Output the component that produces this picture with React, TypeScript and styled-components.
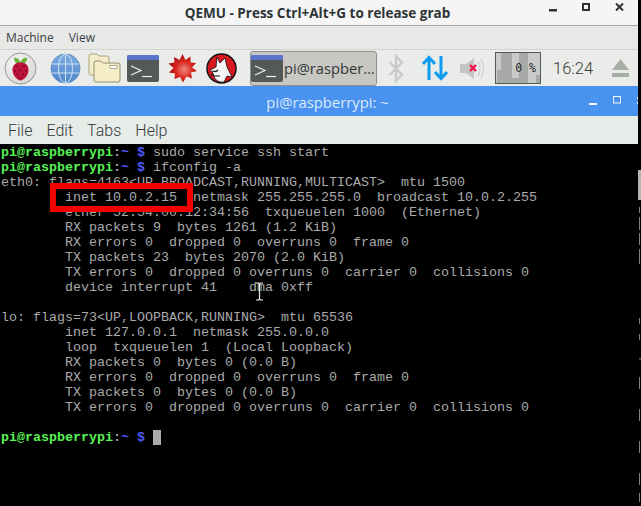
import React from "react";
import styled, { createGlobalStyle } from "styled-components";

const Global = createGlobalStyle`
  html, body { margin: 0; padding: 0; background: #000; overflow: hidden; }
  #root { width: 641px; height: 506px; }
`;

const Screen = styled.div`
  width: 641px;
  height: 506px;
  box-sizing: border-box;
  padding-right: 3px;
  position: relative;
  display: flex;
  flex-direction: column;
  overflow: hidden;
  background: #000;
`;
const TitleBar = styled.div`
  height: 25px;
  flex: none;
  background: #f5f5f5;
  border-bottom: 1px solid #a9a9a7;
  display: flex;
  align-items: center;
  justify-content: center;
  position: relative;
  font: bold 13.5px "Open Sans", sans-serif;
  color: #2e3436;
`;
const TitleText = styled.span`
  display: block;
  transform: translateX(-1.5px);
`;
const WinButtons = styled.div`
  position: absolute;
  right: 14px;
  top: 3px;
  display: flex;
  gap: 25px;
  align-items: flex-start;
`;
const MinGlyph = styled.svg`
  margin-top: 6px;
`;
const MenuBar = styled.div`
  height: 23px;
  flex: none;
  background: #e8e8e6;
  border-bottom: 1px solid #d2d4d0;
  display: flex;
  align-items: center;
  gap: 15px;
  padding-left: 6px;
  font: 12px "Open Sans", sans-serif;
  color: #3a4246;
`;
const Panel = styled.div`
  height: 36px;
  flex: none;
  background: #e9ece8;
  display: flex;
  align-items: center;
`;
const Slot = styled.div<{ $w: number; $gap?: number }>`
  width: ${(p) => p.$w}px;
  margin-left: ${(p) => p.$gap ?? 0}px;
  flex: none;
  display: flex;
  align-items: center;
  justify-content: center;
`;
const TaskButton = styled.div`
  width: 127px;
  height: 35px;
  box-sizing: border-box;
  margin-left: 13px;
  flex: none;
  background: #c8c7c1;
  border: 1px solid #918f8a;
  border-radius: 3px;
  display: flex;
  align-items: center;
  gap: 1px;
  font: 14.7px "Open Sans", sans-serif;
  color: #33383a;
  white-space: nowrap;
  svg { flex: none; }
`;
const Cpu = styled.div`
  width: 46px;
  height: 32px;
  box-sizing: border-box;
  margin-left: 8px;
  flex: none;
  border: 1px solid #55585a;
  background: #c9cbc8;
  position: relative;
  overflow: hidden;
`;
const CpuBar = styled.div<{ $l: number; $w: number; $t: number }>`
  position: absolute;
  left: ${(p) => p.$l}px;
  width: ${(p) => p.$w}px;
  top: ${(p) => p.$t}px;
  bottom: 0;
  background: #a8aaa7;
`;
const CpuText = styled.span`
  position: absolute;
  right: 4px;
  top: 7px;
  font: 11.5px "DejaVu Sans Mono", monospace;
  color: #23282a;
  white-space: pre;
  line-height: 16px;
`;
const Clock = styled.div`
  width: 39px;
  margin-left: 12px;
  flex: none;
  font: 300 16.5px Roboto, sans-serif;
  color: #3b3a36;
  white-space: nowrap;
`;
const TermTitle = styled.div`
  height: 30px;
  box-sizing: border-box;
  padding: 2px 0 0 17px;
  flex: none;
  background: #4a92f0;
  color: #dcebfb;
  font: 14.8px "Open Sans", sans-serif;
  display: flex;
  align-items: center;
  justify-content: center;
  position: relative;
`;
const TermWinButtons = styled.div`
  position: absolute;
  right: 0;
  top: 10px;
  display: flex;
  gap: 15px;
  align-items: flex-start;
`;
const TermMenu = styled.div`
  height: 28px;
  flex: none;
  background: #e8ece8;
  display: flex;
  align-items: center;
  gap: 14px;
  padding-left: 8px;
  font: 300 16px Roboto, sans-serif;
  color: #33393c;
`;
const Terminal = styled.div`
  flex: 1;
  background: #000;
  padding: 1px 0 0 1px;
  font: 13.33px/15px "Liberation Mono", monospace;
  color: #aaa;
`;
const Line = styled.div`
  height: 15px;
  white-space: pre;
`;
const Prompt = styled.span`
  color: #55f255;
  font-weight: bold;
`;
const Path = styled.span`
  color: #5058f8;
  font-weight: bold;
`;
const Colon = styled.span`
  font-weight: bold;
  color: #aaa;
`;
const Block = styled.span`
  display: inline-block;
  width: 8px;
  height: 15px;
  background: #aaa;
  vertical-align: top;
`;
const RedBox = styled.div`
  position: absolute;
  left: 50px;
  top: 183px;
  width: 143px;
  height: 29px;
  box-sizing: border-box;
  border: 6px solid #f00000;
`;
const Cursor = styled.svg`
  position: absolute;
  left: 255px;
  top: 282px;
`;
const ScrollThumb = styled.div`
  position: absolute;
  right: 0;
  top: 170px;
  width: 3px;
  height: 30px;
  background: #b4b4b4;
`;
const Slivers = styled.svg`
  position: absolute;
  right: 0;
  top: 200px;
`;

const Raspberry = () => (
  <svg width="33" height="33" viewBox="0 0 33 33">
    <defs>
      <radialGradient id="ball" cx="0.4" cy="0.35" r="0.8">
        <stop offset="0" stopColor="#fafafa" />
        <stop offset="1" stopColor="#cfcfcd" />
      </radialGradient>
    </defs>
    <circle cx="16.5" cy="16.5" r="15.5" fill="url(#ball)" stroke="#9a9a98" />
    <path d="M10 6 Q14 5 16.5 10 Q19 5 23 6 Q23 11 19 12 L14 12 Q10 11 10 6Z" fill="#6cb33f" />
    <path d="M16.5 10.5 C22 10 25 14 24.5 19 C24 24 20 28 16.5 28.5 C13 28 9 24 8.5 19 C8 14 11 10 16.5 10.5Z" fill="#c0143c" />
    {[
      [13, 14.500], [20, 14.500], [16.5, 18], [11, 19], [22, 19], [13.5, 22.500], [19.5, 22.500], [16.5, 26],
    ].map(([x, y]) => (
      <circle key={`${x}-${y}`} cx={x} cy={y} r="1.300" fill="#8f0d2c" />
    ))}
  </svg>
);
const Globe = () => (
  <svg width="31" height="31" viewBox="0 0 31 31">
    <defs>
      <linearGradient id="gl" x1="0" y1="0" x2="0" y2="1">
        <stop offset="0" stopColor="#7faee3" />
        <stop offset="1" stopColor="#4e86c8" />
      </linearGradient>
    </defs>
    <circle cx="15.5" cy="15.5" r="14.5" fill="url(#gl)" stroke="#5c8cc2" />
    <g fill="none" stroke="#cfe0f4" strokeWidth="1">
      <ellipse cx="15.5" cy="15.5" rx="7" ry="14.5" />
      <path d="M15.5 1V30M1.5 11H29.5M1.5 20H29.5" />
    </g>
  </svg>
);
const Folder = () => (
  <svg width="33" height="30" viewBox="0 0 33 30">
    <path d="M1 3.5Q1 1 3 1H9L11 3H19Q21 3 21 5V22H3Q1 22 1 20Z" fill="#f4eccb" stroke="#a9a17f" />
    <path d="M6 10Q6 8 8 8H13L15 10H30Q32 10 32 12V27Q32 29 30 29H8Q6 29 6 27Z" fill="#f5edc8" stroke="#968e6e" />
    <rect x="22" y="12.5" width="7" height="3" fill="#fff" stroke="#938c70" strokeWidth="0.7" />
  </svg>
);
const TermIcon = () => (
  <svg width="32" height="27" viewBox="0 0 32 27">
    <rect x="0" y="0" width="32" height="27" rx="2" fill="#555955" />
    <path d="M0 2Q0 0 2 0H30Q32 0 32 2V5H0Z" fill="#5a74d0" />
    <path d="M4 11L14 15.5L4 20" fill="none" stroke="#f0f0ee" strokeWidth="1.200" />
    <path d="M15 21.5H25" stroke="#f0f0ee" strokeWidth="1.200" />
  </svg>
);
const Burst = () => (
  <svg width="29" height="29" viewBox="0 0 29 29">
    <defs>
      <radialGradient id="bu" cx="0.55" cy="0.55" r="0.5">
        <stop offset="0" stopColor="#f08a80" />
        <stop offset="0.6" stopColor="#d9261f" />
        <stop offset="1" stopColor="#b01010" />
      </radialGradient>
    </defs>
    <path
      d="M14.5 0L17.5 6L22.5 2.5L22.5 8.5L28 9L24 13.5L29 17L23 18.5L24 24.5L18.5 22.5L15 28.5L12 23L6.5 25L7 19.5L1 18.5L5.5 14L0.5 9.5L6.5 8.5L6 3L11.5 6Z"
      fill="url(#bu)"
    />
  </svg>
);
const Wolf = () => (
  <svg width="31" height="31" viewBox="0 0 31 31">
    <circle cx="15.5" cy="15.5" r="14.5" fill="#d8171f" stroke="#111" strokeWidth="1.5" />
    <path d="M11 4L14 10L19 5L21 14L26 24L21 23L18 29Q11 30 8 24L7 20L4 17L10 14Z" fill="#f5f5f3" stroke="#111" strokeWidth="0.8" />
    <path d="M6 18L10 18.500L12 17" fill="none" stroke="#111" strokeWidth="1.2" />
    <path d="M5 21L8 23L14 23" fill="none" stroke="#111" strokeWidth="1.2" />
  </svg>
);
const Bluetooth = () => (
  <svg width="16" height="29" viewBox="0 0 16 29">
    <path d="M1.5 8L14 20.5L8 27V2L14 8.5L1.5 21" fill="none" stroke="#c9cbc8" strokeWidth="2.4" />
  </svg>
);
const Arrows = () => (
  <svg width="26" height="26" viewBox="0 0 26 26">
    <path d="M7 25V3M1 9L7 2.500L13 9" fill="none" stroke="#0f9cf0" strokeWidth="3" />
    <path d="M19 1V23M13 17L19 23.5L25 17" fill="none" stroke="#0f9cf0" strokeWidth="3" />
  </svg>
);
const Speaker = () => (
  <svg width="27" height="23" viewBox="0 0 27 23">
    <path d="M0 7H6L14 1V22L6 16H0Z" fill="#c4c6c3" />
    <path d="M18 4Q22 11.5 18 19M21 2Q26 11.5 21 21" fill="none" stroke="#d3d5d2" strokeWidth="1.5" />
    <path d="M10 8L16 14M16 8L10 14" stroke="#f0104c" strokeWidth="2.4" />
  </svg>
);
const Eject = () => (
  <svg width="17" height="19" viewBox="0 0 17 19">
    <path d="M8.5 0L17 11H0Z" fill="#a8aca6" />
    <rect x="0" y="14" width="17" height="4" fill="#a8aca6" />
  </svg>
);

const Pr = ({ cmd }: { cmd: string }) => (
  <Line>
    <Prompt>pi@raspberrypi</Prompt>
    <Colon>:</Colon>
    <Path>~ $</Path>
    {cmd}
  </Line>
);

const lines1 = [
  "eth0: flags=4163<UP,BROADCAST,RUNNING,MULTICAST>  mtu 1500",
  "        inet 10.0.2.15  netmask 255.255.255.0  broadcast 10.0.2.255",
  "        ether 52:54:00:12:34:56  txqueuelen 1000  (Ethernet)",
  "        RX packets 9  bytes 1261 (1.2 KiB)",
  "        RX errors 0  dropped 0  overruns 0  frame 0",
  "        TX packets 23  bytes 2070 (2.0 KiB)",
  "        TX errors 0  dropped 0 overruns 0  carrier 0  collisions 0",
  "        device interrupt 41    dma 0xff  ",
  "",
  "lo: flags=73<UP,LOOPBACK,RUNNING>  mtu 65536",
  "        inet 127.0.0.1  netmask 255.0.0.0",
  "        loop  txqueuelen 1  (Local Loopback)",
  "        RX packets 0  bytes 0 (0.0 B)",
  "        RX errors 0  dropped 0  overruns 0  frame 0",
  "        TX packets 0  bytes 0 (0.0 B)",
  "        TX errors 0  dropped 0 overruns 0  carrier 0  collisions 0",
  "",
];

export default function App() {
  return (
    <Screen>
      <Global />
      <TitleBar>
        <TitleText>QEMU - Press Ctrl+Alt+G to release grab</TitleText>
        <WinButtons>
          <MinGlyph width="8" height="3" viewBox="0 0 8 3">
            <rect width="8" height="2.500" fill="#2e3436" />
          </MinGlyph>
          <svg width="8" height="8" viewBox="0 0 8 8">
            <rect x="1" y="1" width="6" height="6" fill="none" stroke="#2e3436" strokeWidth="2" />
          </svg>
          <svg width="9" height="8" viewBox="0 0 9 8">
            <path d="M1 0.5L8 7.5M8 0.5L1 7.5" stroke="#2e3436" strokeWidth="2" />
          </svg>
        </WinButtons>
      </TitleBar>
      <MenuBar>
        <span>Machine</span>
        <span>View</span>
      </MenuBar>
      <Panel>
        <Slot $w={33} $gap={4}><Raspberry /></Slot>
        <Slot $w={31} $gap={13}><Globe /></Slot>
        <Slot $w={33} $gap={7}><Folder /></Slot>
        <Slot $w={32} $gap={6}><TermIcon /></Slot>
        <Slot $w={29} $gap={9}><Burst /></Slot>
        <Slot $w={31} $gap={9}><Wolf /></Slot>
        <TaskButton>
          <TermIcon />
          <span>pi@raspber…</span>
        </TaskButton>
        <Slot $w={16} $gap={11}><Bluetooth /></Slot>
        <Slot $w={26} $gap={18}><Arrows /></Slot>
        <Slot $w={27} $gap={12}><Speaker /></Slot>
        <Cpu>
          <CpuBar $l={1} $w={4} $t={17} />
          <CpuBar $l={5} $w={11} $t={0} />
          <CpuBar $l={16} $w={7} $t={25} />
          <CpuBar $l={23} $w={9} $t={0} />
          <CpuBar $l={40} $w={4} $t={22} />
          <CpuText>0 %</CpuText>
        </Cpu>
        <Clock>16:24</Clock>
        <Slot $w={17} $gap={20}><Eject /></Slot>
      </Panel>
      <TermTitle>
        pi@raspberrypi: ~
        <TermWinButtons>
          <svg width="9" height="9" viewBox="0 0 9 9">
            <rect y="7" width="8" height="2" fill="#f2f7fd" />
          </svg>
          <svg width="9" height="9" viewBox="0 0 9 9">
            <rect x="0.5" y="0.5" width="7" height="6.5" fill="none" stroke="#f2f7fd" />
          </svg>
          <svg width="1" height="9" viewBox="0 0 1 9">
            <rect width="1" height="2" y="1" fill="#f2f7fd" />
            <rect width="1" height="2" y="6" fill="#f2f7fd" />
          </svg>
        </TermWinButtons>
      </TermTitle>
      <TermMenu>
        <span>File</span>
        <span>Edit</span>
        <span>Tabs</span>
        <span>Help</span>
      </TermMenu>
      <Terminal>
        <Pr cmd=" sudo service ssh start" />
        <Pr cmd=" ifconfig -a" />
        {lines1.map((l, i) => (
          <Line key={i}>{l}</Line>
        ))}
        <Line>
          <Prompt>pi@raspberrypi</Prompt>
          <Colon>:</Colon>
          <Path>~ $</Path> <Block />
        </Line>
      </Terminal>
      <RedBox />
      <ScrollThumb />
      <Slivers width="3" height="302" viewBox="0 0 3 302">
        <path
          d="M1.5 7V13M1.5 17V30M1.5 33V45M1.5 49V64M1.5 118V124M1.5 134V140M1 159H3M1.5 177V189M1.5 209V221M1.5 241V253M1.5 273V285M1.5 293V302"
          fill="none"
          stroke="#808080"
        />
      </Slivers>
      <Cursor width="9" height="19" viewBox="0 0 9 19">
        <path d="M1 1H3.5L4.5 2L5.5 1H8M4.5 2V17M1 18H3.5L4.5 17L5.5 18H8" fill="none" stroke="#eee" strokeWidth="1.2" />
      </Cursor>
    </Screen>
  );
}
